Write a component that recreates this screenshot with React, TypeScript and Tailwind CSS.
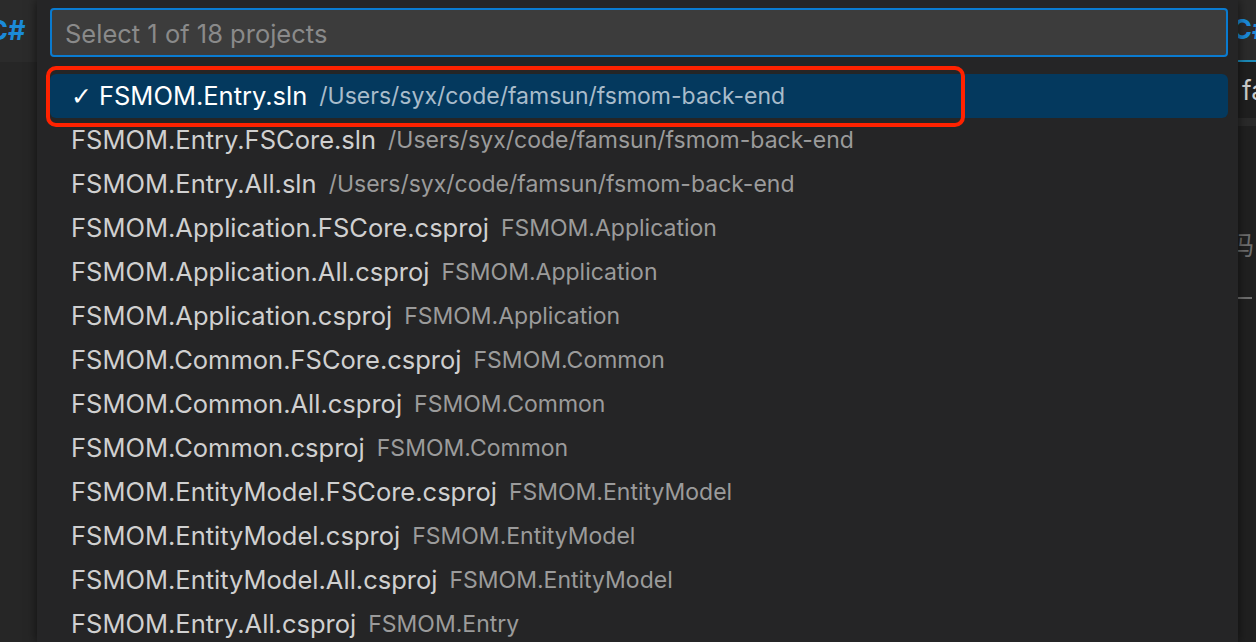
import React from 'react';

const items = [
  { label: 'FSMOM.Entry.sln', desc: '/Users/syx/code/famsun/fsmom-back-end', picked: true },
  { label: 'FSMOM.Entry.FSCore.sln', desc: '/Users/syx/code/famsun/fsmom-back-end' },
  { label: 'FSMOM.Entry.All.sln', desc: '/Users/syx/code/famsun/fsmom-back-end' },
  { label: 'FSMOM.Application.FSCore.csproj', desc: 'FSMOM.Application' },
  { label: 'FSMOM.Application.All.csproj', desc: 'FSMOM.Application' },
  { label: 'FSMOM.Application.csproj', desc: 'FSMOM.Application' },
  { label: 'FSMOM.Common.FSCore.csproj', desc: 'FSMOM.Common' },
  { label: 'FSMOM.Common.All.csproj', desc: 'FSMOM.Common' },
  { label: 'FSMOM.Common.csproj', desc: 'FSMOM.Common' },
  { label: 'FSMOM.EntityModel.FSCore.csproj', desc: 'FSMOM.EntityModel' },
  { label: 'FSMOM.EntityModel.csproj', desc: 'FSMOM.EntityModel' },
  { label: 'FSMOM.EntityModel.All.csproj', desc: 'FSMOM.EntityModel' },
  { label: 'FSMOM.Entry.All.csproj', desc: 'FSMOM.Entry' },
];

export default function App() {
  return (
    <div className="relative flex h-[642px] w-[1256px] overflow-hidden bg-[#232323] font-['Inter','Liberation_Sans',sans-serif]">
      {/* editor behind, left side */}
      <div className="flex w-[37px] shrink-0 flex-col overflow-hidden">
        <div className="flex h-[62px] shrink-0 items-center whitespace-nowrap bg-[#2b2b2b]">
          <span className="-ml-[12px] shrink-0 text-[27px] font-bold text-[#1b8ad8]">C#</span>
          <span className="ml-[10px] shrink-0 text-[26px] text-[#b08f00]">F</span>
        </div>
        <div className="flex-1 bg-[#262626]" />
      </div>

      {/* quick pick */}
      <div className="z-10 flex w-[1201px] shrink-0 flex-col bg-[#252526] pl-[13px] pr-[10px] pt-[8px] shadow-[0_0_10px_rgba(0,0,0,0.6)]">
        <div className="flex h-[49px] shrink-0 items-center rounded-[4px] border-2 border-[#0a7bd0] bg-[#3c3c3c] pl-[13px] pt-[3px]">
          <span className="text-[25.5px] text-[#8a8a8a]">Select 1 of 18 projects</span>
        </div>
        <div className="mt-[17px] flex shrink-0 flex-col">
          {items.map((it) => (
            <div
              key={it.label}
              className={
                it.picked
                  ? 'flex h-[44px] shrink-0 items-center whitespace-nowrap rounded-[6px] bg-[#04395e] pl-[21px]'
                  : 'flex h-[44px] shrink-0 items-center whitespace-nowrap pl-[21px]'
              }
            >
              {it.picked && (
                <span className="mr-[7px] font-['DejaVu_Sans',sans-serif] text-[25px] leading-none text-white">✓</span>
              )}
              <span className={it.picked ? 'text-[25.5px] text-white' : 'text-[25.5px] text-[#d0d0d0]'}>{it.label}</span>
              <span className={it.picked ? 'ml-[12px] text-[23px] text-[#a9bccb]' : 'ml-[12px] text-[23px] text-[#9b9b9b]'}>
                {it.desc}
              </span>
            </div>
          ))}
        </div>
      </div>

      {/* editor behind, right side */}
      <div className="flex flex-1 flex-col overflow-hidden">
        <div className="flex h-[60px] shrink-0 items-center whitespace-nowrap bg-[#2b2b2b]">
          <span className="-ml-[6px] shrink-0 text-[27px] font-bold text-[#1b8ad8]">C#</span>
        </div>
        <div className="h-[2px] shrink-0 bg-[#1c8ab8]" />
        <div className="flex h-[56px] shrink-0 items-center whitespace-nowrap bg-[#1f1f1f]">
          <span className="pl-[4px] text-[26px] text-[#cccccc]">fa</span>
        </div>
        <div className="h-[8px] shrink-0 bg-[#2a2a2a]" />
        <div className="flex flex-1 flex-col bg-[#202020]">
          <span className="mt-[98px] -ml-[10px] whitespace-nowrap font-['Noto_Sans_CJK_SC',sans-serif] text-[26px] leading-[39px] text-[#6e6e6e]">吗</span>
          <div className="mt-[34px] h-[2px] w-[14px] bg-[#6e6e6e]" />
        </div>
      </div>

      {/* red annotation */}
      <div className="pointer-events-none absolute left-[46px] top-[66px] z-20 h-[61px] w-[919px] rounded-[10px] border-[4px] border-[#ff2200]" />
    </div>
  );
}
